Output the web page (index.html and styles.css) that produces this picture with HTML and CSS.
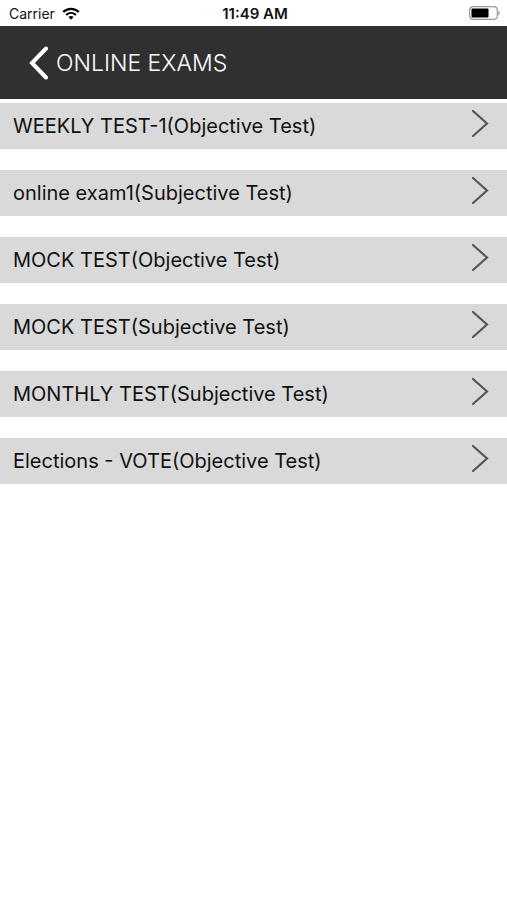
FILE: index.html
```html
<!DOCTYPE html>
<html lang="en">
<head>
<meta charset="utf-8">
<meta name="viewport" content="width=device-width, initial-scale=1">
<title>Online Exams</title>
<link rel="stylesheet" href="styles.css">
</head>
<body>
<div class="status">
  <div class="carrier">
    <span>Carrier</span>
    <svg class="wifi" viewBox="0 0 18 13" aria-hidden="true">
      <path d="M1.2 5C5.5.7 12.5.7 16.8 5" fill="none" stroke="#000" stroke-width="2.3"/>
      <path d="M4.1 8C7 5.3 11 5.3 13.9 8" fill="none" stroke="#000" stroke-width="2.2"/>
      <path d="M6.4 10.1Q9 7.9 11.6 10.1L9 12.8Z"/>
    </svg>
  </div>
  <span class="time">11:49 AM</span>
  <svg class="battery" viewBox="0 0 32 14" aria-hidden="true">
    <rect x=".7" y=".7" width="27.6" height="12.6" rx="3.5" fill="#fff" stroke="#999" stroke-width="1.2"/>
    <rect x="2.5" y="2.5" width="17" height="9" rx="1"/>
    <path d="M29.4 4.6Q32.4 7 29.4 9.4Z" fill="#999"/>
  </svg>
</div>
<header class="bar">
  <button class="back" type="button" aria-label="Back">
    <svg viewBox="0 0 20 34" aria-hidden="true"><path d="M17 2.5L3 17L17 31.5" fill="none" stroke="#fff" stroke-width="4" stroke-linecap="round" stroke-linejoin="miter"/></svg>
  </button>
  <h1 class="title">ONLINE EXAMS</h1>
</header>
<main>
  <ul class="exams">
    <li><a class="exam" href="#"><span>WEEKLY TEST-1(Objective Test)</span><svg class="chevron" viewBox="0 0 18 28" aria-hidden="true"><path d="M2 2L16 14.5L2 27"/></svg></a></li>
    <li><a class="exam" href="#"><span>online exam1(Subjective Test)</span><svg class="chevron" viewBox="0 0 18 28" aria-hidden="true"><path d="M2 2L16 14.5L2 27"/></svg></a></li>
    <li><a class="exam" href="#"><span>MOCK TEST(Objective Test)</span><svg class="chevron" viewBox="0 0 18 28" aria-hidden="true"><path d="M2 2L16 14.5L2 27"/></svg></a></li>
    <li><a class="exam" href="#"><span>MOCK TEST(Subjective Test)</span><svg class="chevron" viewBox="0 0 18 28" aria-hidden="true"><path d="M2 2L16 14.5L2 27"/></svg></a></li>
    <li><a class="exam" href="#"><span>MONTHLY TEST(Subjective Test)</span><svg class="chevron" viewBox="0 0 18 28" aria-hidden="true"><path d="M2 2L16 14.5L2 27"/></svg></a></li>
    <li><a class="exam" href="#"><span>Elections - VOTE(Objective Test)</span><svg class="chevron" viewBox="0 0 18 28" aria-hidden="true"><path d="M2 2L16 14.5L2 27"/></svg></a></li>
  </ul>
</main>
</body>
</html>
```
FILE: styles.css
```css
* {
  box-sizing: border-box;
}

body {
  margin: 0;
  background: #fff;
  color: #111;
  font-family: Inter, "Liberation Sans", sans-serif;
}

.status {
  display: grid;
  grid-template-columns: 1fr auto 1fr;
  align-items: center;
  height: 26px;
  padding: 0 6px 0 9px;
  font-size: 14px;
}

.carrier {
  display: flex;
  align-items: center;
  gap: 7px;
}

.wifi {
  width: 18px;
  height: 13px;
}

.time {
  font-size: 15px;
  font-weight: 600;
}

.battery {
  width: 32px;
  height: 14px;
  justify-self: end;
}

.bar {
  display: flex;
  align-items: center;
  gap: 7px;
  height: 73px;
  padding-left: 29px;
  background: #303030;
  color: #fff;
}

.back {
  width: 20px;
  height: 34px;
  padding: 0;
  border: 0;
  background: none;
}

.back svg {
  display: block;
}

.title {
  margin: 0;
  font-size: 23px;
  font-weight: 300;
}

.exams {
  display: flex;
  flex-direction: column;
  gap: 21px;
  margin: 0;
  padding: 4px 0 0;
  list-style: none;
}

.exam {
  display: flex;
  align-items: center;
  justify-content: space-between;
  height: 46px;
  padding: 0 18px 0 13px;
  background: #d9d9d9;
  color: inherit;
  font-size: 20px;
  text-decoration: none;
}

.chevron {
  width: 18px;
  height: 28px;
  margin-bottom: 6px;
  fill: none;
  stroke: #555;
  stroke-width: 2.2;
  stroke-linecap: round;
}
```
